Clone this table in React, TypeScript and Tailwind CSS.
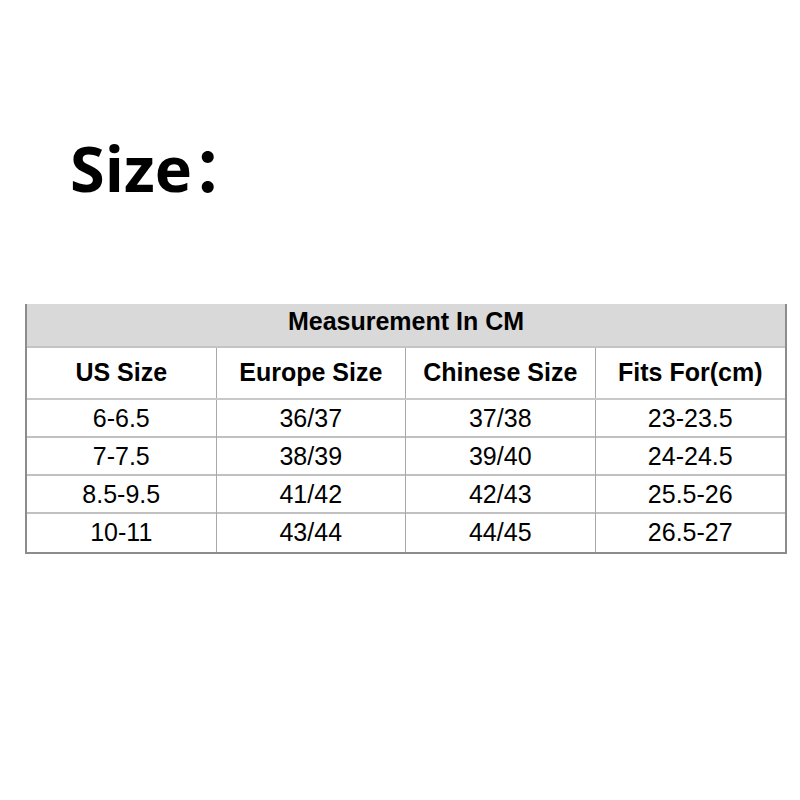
import React from 'react';

const rows = [
  ['6-6.5', '36/37', '37/38', '23-23.5'],
  ['7-7.5', '38/39', '39/40', '24-24.5'],
  ['8.5-9.5', '41/42', '42/43', '25.5-26'],
  ['10-11', '43/44', '44/45', '26.5-27'],
];

const heads = ['US Size', 'Europe Size', 'Chinese Size', 'Fits For(cm)'];

const App = () => {
  return (
    <div className="w-[800px] h-[800px] bg-white">
      <div className="pt-[136px] pl-[70px]">
        <h1 className="text-[63px] leading-none font-bold text-black" style={{ fontFamily: '"Open Sans", "Noto Sans CJK SC", sans-serif' }}>
          Size：
        </h1>
      </div>
      <div
        className="ml-[25px] mt-[105px] w-[762px] border-x-2 border-b-2 border-[#8c8c8c] text-black"
        style={{ fontFamily: '"Liberation Sans", Arial, sans-serif' }}
      >
        <div className="h-[44px] bg-[#d9d9d9] border-b-2 border-[#c4c4c4] text-center text-[25px] font-bold leading-none pt-[5px]">
          Measurement In CM
        </div>
        <div className="grid grid-cols-4 h-[52px] border-b-2 border-[#c8c8c8]">
          {heads.map((h, i) => (
            <div
              key={h}
              className={`flex items-center justify-center text-[25px] font-bold ${i < 3 ? 'border-r border-[#a8a8a8]' : ''}`}
            >
              {h}
            </div>
          ))}
        </div>
        {rows.map((r, ri) => (
          <div
            key={ri}
            className={`grid grid-cols-4 h-[38px] ${ri < 3 ? 'border-b-2 border-[#c0c0c0]' : ''}`}
          >
            {r.map((c, i) => (
              <div
                key={i}
                className={`flex items-center justify-center text-[25px] ${i < 3 ? 'border-r border-[#a8a8a8]' : ''}`}
              >
                {c}
              </div>
            ))}
          </div>
        ))}
      </div>
    </div>
  );
};

export default App;
